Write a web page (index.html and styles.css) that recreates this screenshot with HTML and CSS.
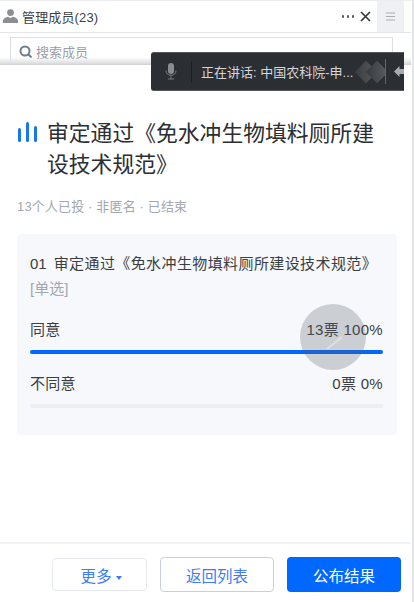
FILE: index.html
```html
<!DOCTYPE html>
<html lang="en">
<head>
    <meta charset="UTF-8">
    <meta name="viewport" content="width=device-width, initial-scale=1.0">
    <title>投票结果</title>
    <link rel="stylesheet" href="styles.css">
</head>
<body>

<div class="window">
    <div class="members-bar">
        <div class="members-title">
            <svg class="user-icon" width="17" height="14" viewBox="0 0 17 14"><circle cx="8.5" cy="3.6" r="3.4" fill="#8b8f94"/><path d="M1 14v-2.2c0-2 2.6-3.6 5-4l2.500 1.200 2.500-1.200c2.400.4 5 2 5 4V14z" fill="#8b8f94"/></svg>
            <span>管理成员(23)</span>
        </div>
        <div class="members-actions">
            <span class="dots"><i></i><i></i><i></i></span>
            <svg width="11" height="11" viewBox="0 0 11 11"><path d="M1 1l9 9M10 1l-9 9" stroke="#33363a" stroke-width="1.600" fill="none"/></svg>
        </div>
        <div class="menu-btn">
            <svg width="9" height="9" viewBox="0 0 9 9"><path d="M0 1h9M0 4.500h9M0 8h9" stroke="#a9adb2" stroke-width="1"/></svg>
        </div>
    </div>

    <div class="search-strip">
        <div class="search-box">
            <svg width="14" height="14" viewBox="0 0 14 14"><circle cx="6" cy="6" r="4.500" stroke="#6e7c92" stroke-width="2" fill="none"/><path d="M9.500 9.500l3 3" stroke="#6e7c92" stroke-width="2"/></svg>
            <span>搜索成员</span>
        </div>
    </div>

    <div class="content">
        <div class="vote-title">
            <svg class="chart-icon" width="19" height="20" viewBox="0 0 19 20"><rect x="0" y="6" width="3" height="14" rx="1.500" fill="#1677f0"/><rect x="8" y="0" width="3" height="20" rx="1.500" fill="#1677f0"/><rect x="16" y="4" width="3" height="16" rx="1.500" fill="#1677f0"/></svg>
            <h1>审定通过《免水冲生物填料厕所建设技术规范》</h1>
        </div>
        <p class="vote-meta">13个人已投 · 非匿名 · 已结束</p>

        <div class="result-card">
            <div class="question"><span>01</span><span class="question-text">审定通过《免水冲生物填料厕所建设技术规范》</span></div>
            <div class="question-type">[单选]</div>

            <div class="option first">
                <div class="option-row"><span>同意</span><span>13票 100%</span></div>
                <div class="track"><div class="fill" style="width:100%"></div></div>
            </div>
            <div class="option">
                <div class="option-row"><span>不同意</span><span>0票 0%</span></div>
                <div class="track"><div class="fill" style="width:0%"></div></div>
            </div>
        </div>
    </div>

    <div class="footer">
        <button class="btn btn-more">更多<i class="caret"></i></button>
        <button class="btn btn-back">返回列表</button>
        <button class="btn btn-publish">公布结果</button>
    </div>

    <!-- speaking toolbar floats over the page -->
    <div class="speaking-bar">
        <svg class="mic" width="12" height="17" viewBox="0 0 12 17"><rect x="3" y="0" width="6" height="11" rx="3" fill="#8a8d90"/><path d="M1 7.500c0 3 2 4.800 5 4.800s5-1.800 5-4.800M6 12.300V16M3 16h6" stroke="#777a7d" stroke-width="1" fill="none"/></svg>
        <span class="bar-divider"></span>
        <span class="speaking-text">正在讲话: 中国农科院-申...</span>
        <div class="bar-deco">
            <i class="diamond"></i><i class="diamond"></i>
        </div>
        <svg class="back-arrow" width="13" height="11" viewBox="0 0 13 11"><path d="M0 5.500L5.500 0v3H13v5H5.500v3z" fill="#a9abad"/></svg>
    </div>

    <!-- touch indicator -->
    <div class="touch-dot">
        <svg width="26" height="26" viewBox="0 0 26 26"><path d="M7 25L22 13" stroke="#dfe0e3" stroke-width="2" fill="none"/></svg>
    </div>
</div>

</body>
</html>
```

FILE: styles.css
```css
* {
    box-sizing: border-box;
}
html, body {
    margin: 0;
    padding: 0;
    background-color: white;
}
body {
    font-family: "Liberation Sans", "Noto Sans CJK SC", sans-serif;
    color: #33363b;
}
.window {
    position: relative;
    width: 414px;
    height: 602px;
    overflow: hidden;
    display: flex;
    flex-direction: column;
    border-top: 1px solid #eceef0;
    border-right: 2px solid #e3e4e6;
    padding-right: 1px;
}
.members-bar {
    display: flex;
    align-items: center;
    height: 32px;
    flex-shrink: 0;
    border-bottom: 1px solid #e4e5e8;
    padding-left: 2px;
}
.members-title {
    display: flex;
    align-items: center;
    gap: 3px;
    flex: 1;
    margin-top: -1px;
    font-size: 13px;
    letter-spacing: 0.15px;
    color: #3c3f44;
}
.members-actions {
    display: flex;
    align-items: center;
    gap: 6px;
    margin-right: 6px;
}
.dots {
    display: flex;
    gap: 2.500px;
}
.dots i {
    width: 2.500px;
    height: 2.500px;
    border-radius: 50%;
    background-color: #55585c;
}
.menu-btn {
    display: flex;
    align-items: center;
    justify-content: center;
    width: 27px;
    height: 31px;
    margin-right: 7px;
    background-color: #eef0f3;
}
.search-strip {
    height: 32px;
    flex-shrink: 0;
    padding: 4px 18px 0 10px;
    overflow: hidden;
    background-color: white;
    position: relative;
}
.search-strip::after {
    content: "";
    position: absolute;
    left: 0;
    right: 0;
    bottom: 0;
    height: 8px;
    background: linear-gradient(to bottom, rgba(225, 226, 228, 0), #e2e3e5 70%, #cfd0d2 100%);
}
.search-box {
    display: flex;
    align-items: center;
    gap: 3px;
    height: 32px;
    padding: 0 0 3px 8px;
    border: 1px solid #dcdfe8;
    background-color: white;
    font-size: 13px;
    color: #9a9ea6;
}
.content {
    padding: 0 15px 0 17px;
    margin-right: -1px;
}
.vote-title {
    display: flex;
    align-items: flex-start;
    gap: 10px;
    margin-top: 53px;
    padding-right: 12px;
}
.chart-icon {
    flex-shrink: 0;
    margin: 4px 0 0 1px;
}
.vote-title h1 {
    margin: 0;
    font-size: 21.800px;
    font-weight: normal;
    line-height: 31px;
    color: #2b2e33;
}
.vote-meta {
    margin: 17px 0 0;
    font-size: 13px;
    line-height: 20px;
    letter-spacing: 0.15px;
    color: #a3a7ae;
}
.result-card {
    margin-top: 17px;
    height: 201px;
    padding: 20px 14px 0 13px;
    border-radius: 4px;
    background-color: #f6f8fc;
}
.question {
    display: flex;
    gap: 7px;
    font-size: 15px;
    line-height: 20px;
    white-space: nowrap;
    color: #3a3d42;
}
.question-text {
    letter-spacing: 0.4px;
}
.question-type {
    margin-top: 5px;
    font-size: 15px;
    line-height: 20px;
    color: #a3a7ae;
}
.option {
    margin-top: 20px;
}
.option.first {
    margin-top: 21px;
}
.option-row {
    display: flex;
    justify-content: space-between;
    font-size: 15px;
    line-height: 20px;
    letter-spacing: 0.3px;
    color: #3a3d42;
}
.track {
    height: 4px;
    margin-top: 10px;
    border-radius: 2px;
    background-color: #eceef2;
}
.fill {
    height: 100%;
    border-radius: 2px;
    background-color: #0068ff;
}
.footer {
    display: flex;
    align-items: center;
    justify-content: flex-end;
    gap: 13px;
    margin-top: auto;
    height: 60px;
    flex-shrink: 0;
    padding: 3px 10px 0 0;
    border-top: 2px solid #f2f3f6;
}
.btn {
    height: 35px;
    width: 114px;
    padding: 0;
    border-radius: 4px;
    font-family: inherit;
    font-size: 15.500px;
    cursor: pointer;
}
.btn-more {
    width: 95px;
    height: 33px;
    padding-left: 3px;
    border: 1px solid #e6e9f0;
    background-color: white;
    color: #3d7cf5;
}
.caret {
    display: inline-block;
    margin-left: 4px;
    vertical-align: 2px;
    border-left: 3px solid transparent;
    border-right: 3px solid transparent;
    border-top: 4px solid #3d7cf5;
}
.btn-back {
    border: 1px solid #c9cfdb;
    background-color: white;
    color: #3d7cf5;
}
.btn-publish {
    border: none;
    background-color: #0068ff;
    color: white;
}
.speaking-bar {
    position: absolute;
    left: 151px;
    top: 51px;
    width: 253px;
    height: 39px;
    display: flex;
    align-items: center;
    padding-left: 14px;
    border-radius: 3px 0 0 3px;
    background-color: #2b2e32;
    border-top: 1px solid #55585b;
    border-bottom: 1px solid #55585b;
    color: #d6d7d8;
    font-size: 13px;
    overflow: hidden;
}
.mic {
    flex-shrink: 0;
}
.bar-divider {
    flex-shrink: 0;
    width: 1px;
    height: 22px;
    margin: 0 9px 0 14px;
    background-color: #1c1e21;
}
.speaking-text {
    flex-shrink: 0;
    width: 154px;
    white-space: nowrap;
}
.bar-deco {
    flex-shrink: 0;
    display: flex;
    align-items: center;
    width: 31px;
    height: 25px;
    padding-left: 3px;
    overflow: hidden;
    border-right: 1px solid #63666a;
}
.diamond {
    flex-shrink: 0;
    width: 16px;
    height: 16px;
    margin-right: -5px;
    transform: rotate(45deg);
    background: linear-gradient(45deg, #37393d, #5a5d61);
}
.back-arrow {
    flex-shrink: 0;
    margin-left: 8px;
}
.touch-dot {
    position: absolute;
    left: 300px;
    top: 303px;
    width: 66px;
    height: 66px;
    display: flex;
    align-items: center;
    justify-content: center;
    border-radius: 50%;
    background-color: rgba(90, 92, 98, 0.27);
}
```
